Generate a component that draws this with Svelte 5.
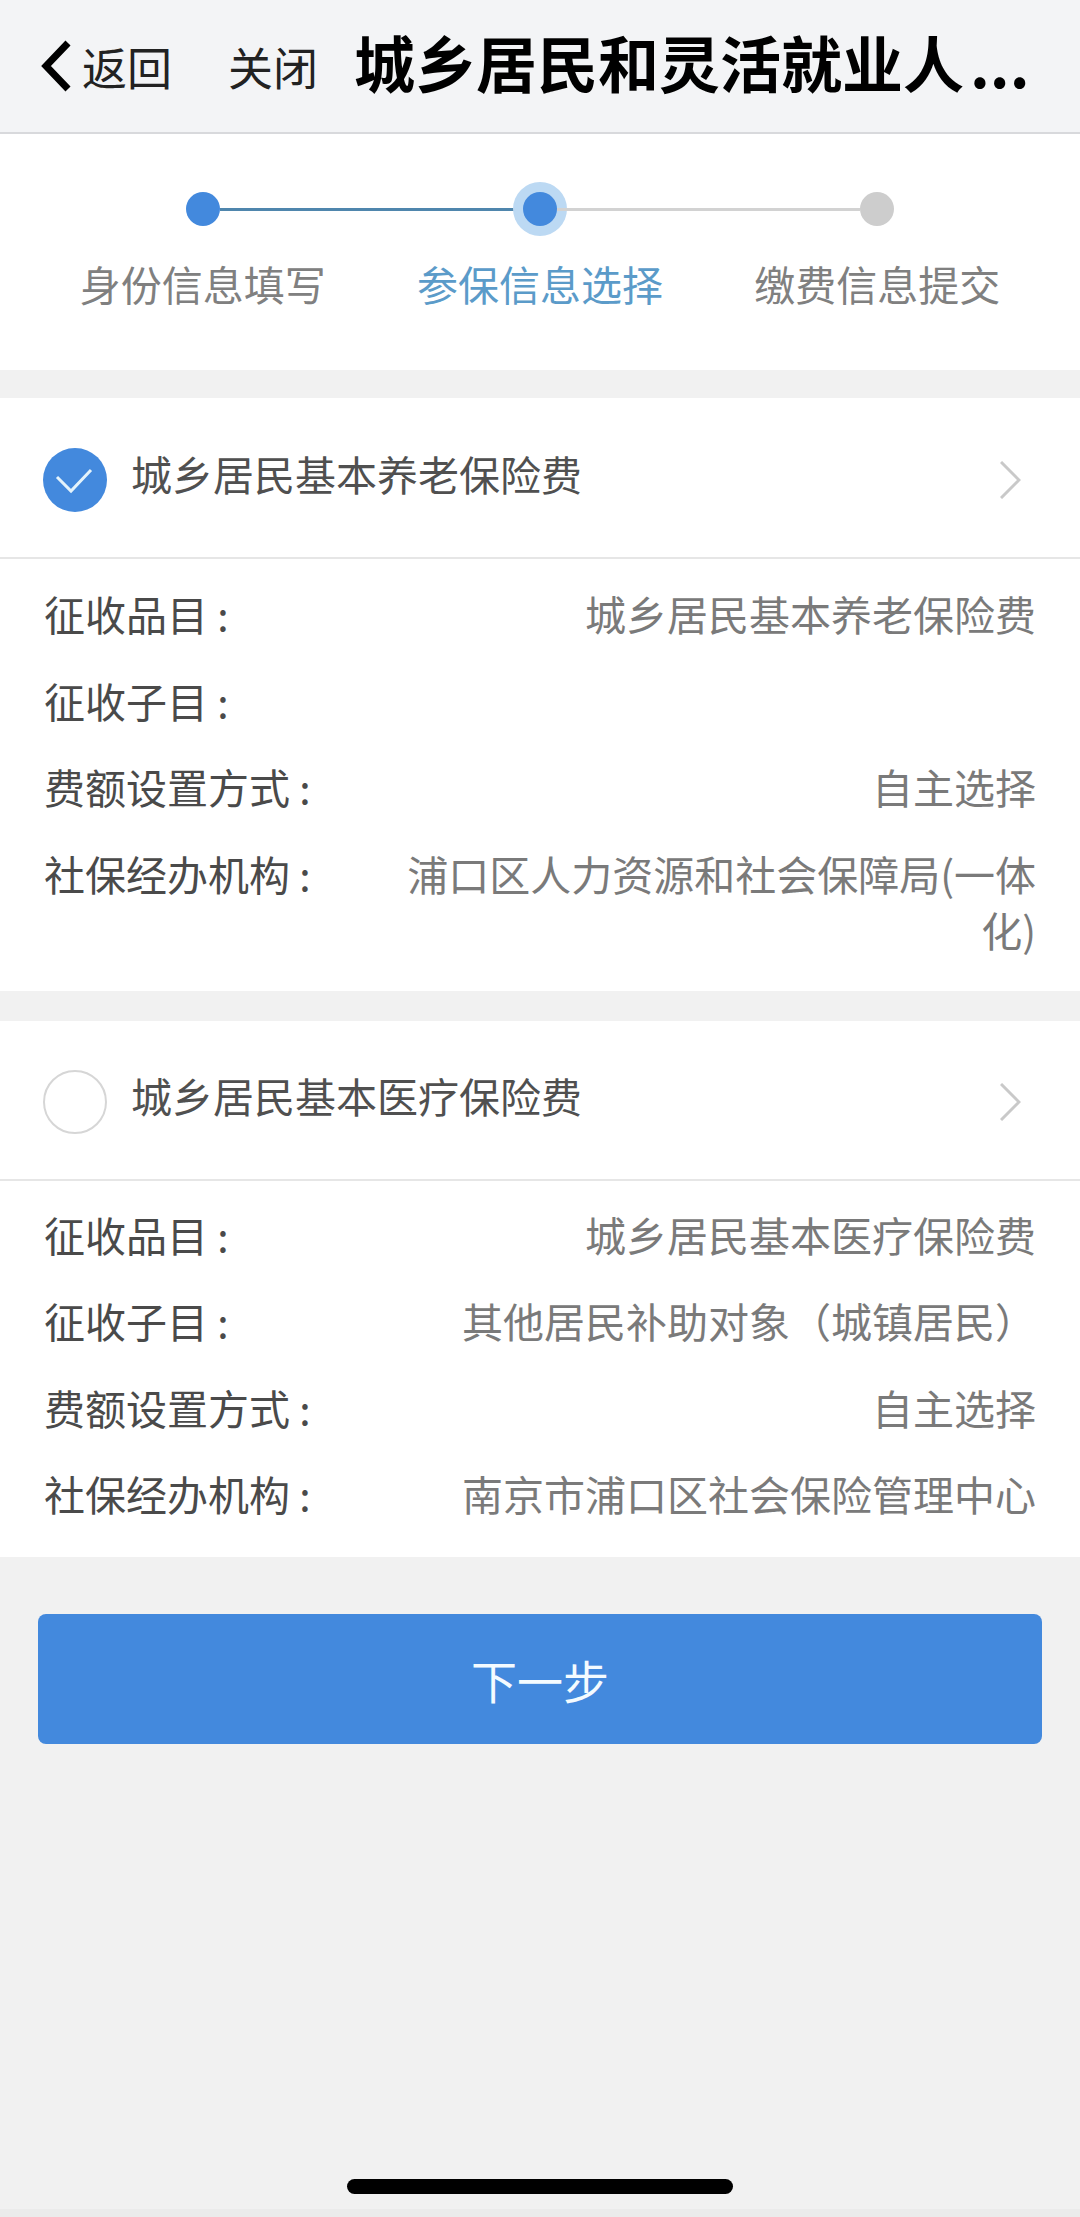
<script>
	const steps = [
		{ label: '身份信息填写', state: 'done' },
		{ label: '参保信息选择', state: 'active' },
		{ label: '缴费信息提交', state: 'todo' }
	];

	const sections = [
		{
			title: '城乡居民基本养老保险费',
			checked: true,
			rows: [
				['征收品目 :', '城乡居民基本养老保险费'],
				['征收子目 :', ''],
				['费额设置方式 :', '自主选择'],
				['社保经办机构 :', '浦口区人力资源和社会保障局(一体化)']
			]
		},
		{
			title: '城乡居民基本医疗保险费',
			checked: false,
			rows: [
				['征收品目 :', '城乡居民基本医疗保险费'],
				['征收子目 :', '其他居民补助对象（城镇居民）'],
				['费额设置方式 :', '自主选择'],
				['社保经办机构 :', '南京市浦口区社会保险管理中心']
			]
		}
	];
</script>

<div class="page">
	<header class="nav">
		<button class="back">
			<svg width="34" height="54" viewBox="0 0 34 54">
				<path d="M29 4 L7 27 L29 50" fill="none" stroke="#000" stroke-width="7" />
			</svg>
			<span>返回</span>
		</button>
		<button class="close">关闭</button>
		<h1>城乡居民和灵活就业人<span class="dots">...</span></h1>
	</header>

	<section class="steps">
		<div class="track">
			<span class="dot done"></span>
			<span class="line on"></span>
			<span class="dot active"></span>
			<span class="line"></span>
			<span class="dot"></span>
		</div>
		<div class="labels">
			{#each steps as step}
				<span class:current={step.state === 'active'}>{step.label}</span>
			{/each}
		</div>
	</section>

	{#each sections as section}
		<section class="card">
			<div class="card-head">
				{#if section.checked}
					<svg class="check" width="64" height="64" viewBox="0 0 64 64">
						<circle cx="32" cy="32" r="32" fill="#4389dd" />
						<path d="M14 29 L28 43 L48 22" fill="none" stroke="#e4f3fb" stroke-width="3" />
					</svg>
				{:else}
					<span class="radio"></span>
				{/if}
				<span class="card-title">{section.title}</span>
				<svg class="chevron" width="21" height="38" viewBox="0 0 21 38">
					<path d="M1 1 L19 19 L1 37" fill="none" stroke="#c9c9c9" stroke-width="3" />
				</svg>
			</div>
			<dl class="rows">
				{#each section.rows as [name, value]}
					<div class="row">
						<dt>{name}</dt>
						<dd>{value}</dd>
					</div>
				{/each}
			</dl>
		</section>
	{/each}

	<button class="next">下一步</button>

	<div class="home-bar"></div>
	<div class="bottom-edge"></div>
</div>

<style>
	:global(body) {
		margin: 0;
		background: #f1f1f1;
	}

	.page {
		height: 2217px;
		display: flex;
		flex-direction: column;
		background: #f1f1f1;
		overflow: hidden;
		font-family: "Noto Sans CJK SC", "Liberation Sans", sans-serif;
		color: #505050;
	}

	button {
		border: 0;
		padding: 0;
		background: none;
		font: inherit;
		color: inherit;
	}

	.nav {
		height: 132px;
		flex: none;
		display: flex;
		align-items: center;
		background: #f3f4f6;
		border-bottom: 2px solid #d8d9dc;
		color: #000;
	}

	.back {
		display: flex;
		align-items: center;
		margin-left: 39px;
		font-size: 45px;
		color: #222;
	}

	.back span {
		margin-left: 9px;
	}

	.close {
		margin-left: 56px;
		font-size: 45px;
		color: #222;
	}

	h1 {
		margin: -10px 0 0 36px;
		font-size: 61px;
		font-weight: 700;
		line-height: 1;
		white-space: nowrap;
		color: #000;
	}

	.dots {
		margin-left: 6px;
	}

	.steps {
		height: 236px;
		flex: none;
		background: #fff;
		box-sizing: border-box;
		padding: 57px 34px 0;
	}

	.track {
		height: 36px;
		display: flex;
		align-items: center;
		padding: 0 152px;
	}

	.dot {
		width: 34px;
		height: 34px;
		flex: none;
		border-radius: 50%;
		background: #cdcdcd;
	}

	.dot.done,
	.dot.active {
		background: #4389dd;
	}

	.dot.active {
		box-shadow: 0 0 0 10px #bcd9f3;
	}

	.line {
		flex: 1;
		height: 3px;
		background: #d2d2d2;
	}

	.line.on {
		background: #4f86ad;
	}

	.labels {
		display: grid;
		grid-template-columns: repeat(3, 1fr);
		margin-top: 27px;
		text-align: center;
		font-size: 41px;
		line-height: 58px;
		color: #808080;
	}

	.labels .current {
		color: #5b9bc9;
	}

	.card {
		margin-top: 28px;
		flex: none;
		background: #fff;
	}

	.card + .card {
		margin-top: 30px;
	}

	.card-head {
		height: 155px;
		display: flex;
		align-items: center;
		padding: 4px 59px 0 43px;
		border-bottom: 2px solid #e6e6e6;
	}

	.card + .card .card-head {
		height: 154px;
	}

	.radio {
		width: 64px;
		height: 64px;
		box-sizing: border-box;
		border: 2px solid #d6d6d6;
		border-radius: 50%;
	}

	.check,
	.radio,
	.chevron {
		flex: none;
	}

	.card-title {
		flex: 1;
		margin: -14px 0 0 24px;
		font-size: 41px;
		color: #505050;
	}

	.rows {
		margin: 0;
		padding: 11px 44px 18px;
	}

	.card + .card .rows {
		padding: 10px 44px 20px;
	}

	.row {
		display: flex;
		justify-content: space-between;
		align-items: flex-start;
		padding: 15px 0;
		font-size: 41px;
		line-height: 56.5px;
		min-height: 56.5px;
	}

	dt {
		flex: none;
		color: #4a4a4a;
	}

	dd {
		margin: 0;
		max-width: 632px;
		text-align: right;
		color: #7a7a7a;
	}

	.next {
		flex: none;
		height: 130px;
		margin: 57px 38px 0;
		border-radius: 8px;
		background: #4389dd;
		color: #f4fbff;
		font-size: 46px;
	}

	.home-bar {
		width: 386px;
		height: 15px;
		flex: none;
		margin: auto auto 15px;
		border-radius: 8px;
		background: #000;
	}

	.bottom-edge {
		height: 8px;
		flex: none;
		background: #ebebeb;
	}
</style>
